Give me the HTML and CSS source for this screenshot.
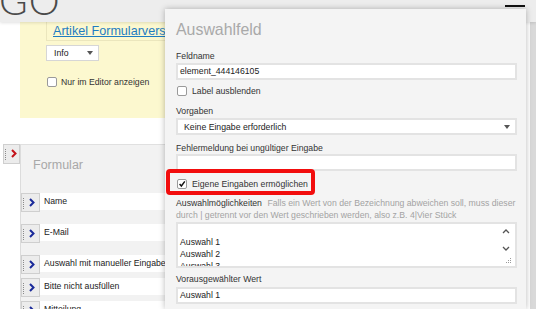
FILE: index.html
```html
<!DOCTYPE html>
<html lang="de">
<head>
<meta charset="utf-8">
<title>Formular</title>
<link rel="stylesheet" href="styles.css">
</head>
<body>
<header class="header">
  <span class="logo">GO</span>
  <span class="menu"></span>
</header>
<main class="main">
  <section class="notice">
    <div class="link-box"><a class="article-link" href="#">Artikel Formularversand</a></div>
    <div class="select small-select"><span>Info</span><span class="caret"></span></div>
    <label class="check-row notice-check"><span class="checkbox"></span><span>Nur im Editor anzeigen</span></label>
  </section>
  <section class="builder">
    <div class="handle handle-top"><span class="dots"></span><svg class="chev" viewBox="0 0 6 9" width="6" height="9"><polyline points="1,1 4.5,4.5 1,8" fill="none" stroke="#c4121a" stroke-width="2"/></svg></div>
    <div class="panel">
      <div class="panel-title">Formular</div>
      <div class="row r1"><div class="handle"><span class="dots"></span><svg class="chev" viewBox="0 0 6 9" width="6" height="9"><polyline points="1,1 4.5,4.5 1,8" fill="none" stroke="#1a2a9a" stroke-width="2"/></svg></div><div class="field">Name</div></div>
      <div class="row r2"><div class="handle"><span class="dots"></span><svg class="chev" viewBox="0 0 6 9" width="6" height="9"><polyline points="1,1 4.5,4.5 1,8" fill="none" stroke="#1a2a9a" stroke-width="2"/></svg></div><div class="field">E-Mail</div></div>
      <div class="row r3"><div class="handle"><span class="dots"></span><svg class="chev" viewBox="0 0 6 9" width="6" height="9"><polyline points="1,1 4.5,4.5 1,8" fill="none" stroke="#1a2a9a" stroke-width="2"/></svg></div><div class="field">Auswahl mit manueller Eingabemöglichkeit</div></div>
      <div class="row r4"><div class="handle"><span class="dots"></span><svg class="chev" viewBox="0 0 6 9" width="6" height="9"><polyline points="1,1 4.5,4.5 1,8" fill="none" stroke="#1a2a9a" stroke-width="2"/></svg></div><div class="field">Bitte nicht ausfüllen</div></div>
      <div class="row r5"><div class="handle"><span class="dots"></span><svg class="chev" viewBox="0 0 6 9" width="6" height="9"><polyline points="1,1 4.5,4.5 1,8" fill="none" stroke="#1a2a9a" stroke-width="2"/></svg></div><div class="field">Mitteilung</div></div>
    </div>
  </section>
</main>
<div class="side-strip"></div>
<aside class="modal">
  <h1 class="modal-title">Auswahlfeld</h1>
  <div class="label l-feldname">Feldname</div>
  <div class="input">element_444146105</div>
  <label class="check-row c-label"><span class="checkbox"></span><span>Label ausblenden</span></label>
  <div class="label l-vorgaben">Vorgaben</div>
  <div class="select big-select"><span>Keine Eingabe erforderlich</span><span class="caret"></span></div>
  <div class="label l-fehler">Fehlermeldung bei ungültiger Eingabe</div>
  <div class="input"></div>
  <div class="highlight">
    <label class="check-row c-eigene"><span class="checkbox checked"><svg viewBox="0 0 10 10" width="10" height="10"><polyline points="2,5 4.2,7.5 8.5,1.8" fill="none" stroke="#111" stroke-width="1.8"/></svg></span><span>Eigene Eingaben ermöglichen</span></label>
  </div>
  <div class="label l-options"><span class="strong">Auswahlmöglichkeiten</span> <span class="hint">Falls ein Wert von der Bezeichnung abweichen soll, muss dieser durch | getrennt vor den Wert geschrieben werden, also z.B. 4|Vier Stück</span></div>
  <div class="textarea">
    <div class="ta-lines"><div>Auswahl 1</div><div>Auswahl 2</div><div>Auswahl 3</div></div>
    <div class="ta-scroll">
      <svg viewBox="0 0 8 5" width="8" height="5"><polyline points="1,4 4,1 7,4" fill="none" stroke="#555" stroke-width="1.3"/></svg>
      <svg viewBox="0 0 8 5" width="8" height="5"><polyline points="1,1 4,4 7,1" fill="none" stroke="#555" stroke-width="1.3"/></svg>
    </div>
    <svg class="grip" viewBox="0 0 6 6" width="6" height="6"><rect x="4" y="0" width="1" height="1" fill="#999"/><rect x="2" y="2" width="1" height="1" fill="#999"/><rect x="4" y="2" width="1" height="1" fill="#999"/><rect x="0" y="4" width="1" height="1" fill="#999"/><rect x="2" y="4" width="1" height="1" fill="#999"/><rect x="4" y="4" width="1" height="1" fill="#999"/></svg>
  </div>
  <div class="label l-voraus">Vorausgewählter Wert</div>
  <div class="input">Auswahl 1</div>
</aside>
</body>
</html>
```
FILE: styles.css
```css
* { box-sizing: border-box; }
html, body { margin: 0; padding: 0; }
body {
  width: 536px;
  height: 309px;
  overflow: hidden;
  background: #fff;
  font-family: "Liberation Sans", Arial, sans-serif;
  font-size: 8.7px;
  color: #333;
  position: relative;
}
.header {
  height: 22px;
  background: #ededed;
  display: flex;
  justify-content: space-between;
  align-items: flex-start;
  overflow: hidden;
  box-shadow: 0 1px 3px rgba(0,0,0,0.12);
  position: relative;
  z-index: 1;
}
.logo {
  display: block;
  font-family: Lato, "Open Sans", sans-serif;
  font-weight: 300;
  font-size: 39px;
  line-height: 38px;
  margin-top: -19px;
  margin-left: -1px;
  color: #4a4a4a;
  letter-spacing: 1px;
}
.menu {
  display: block;
  width: 20px;
  height: 2px;
  background: #111;
  margin-top: 5px;
  margin-right: 11px;
}
.main { display: flex; flex-direction: column; height: 287px; overflow: hidden; }
.notice {
  margin-left: 20px;
  width: 420px;
  background: #fcf8cf;
  padding: 0 0 30px 26px;
}
.link-box {
  height: 19px;
  border-left: 1px solid #ebe6bd;
  border-bottom: 1px solid #ebe6bd;
  padding-left: 6px;
  line-height: 18px;
}
.article-link {
  color: #1f7dc2;
  font-size: 12.6px;
  text-decoration: underline;
  white-space: nowrap;
}
.select {
  display: flex;
  align-items: center;
  justify-content: space-between;
  background: #fff;
  color: #222;
}
.small-select {
  margin-top: 4px;
  width: 53px;
  height: 16px;
  border: 1px solid #d6d6d6;
  padding: 0 5px 0 7px;
}
.caret {
  width: 0; height: 0;
  border-left: 3.5px solid transparent;
  border-right: 3.5px solid transparent;
  border-top: 4px solid #555;
}
.check-row {
  display: flex;
  align-items: center;
  gap: 5px;
  height: 12px;
  line-height: 12px;
}
.checkbox {
  width: 10px; height: 10px;
  background: #fff;
  border: 1px solid #9a9a9a;
  border-radius: 2px;
  display: flex;
  align-items: center;
  justify-content: center;
  flex: none;
}
.checkbox svg { display: block; }
.notice-check { margin-top: 15px; margin-left: 1px; gap: 4px; }
.builder {
  display: flex;
  margin-top: 26px;
  align-items: flex-start;
}
.handle {
  width: 17px;
  height: 20px;
  background: #ececec;
  border: 1px solid #cfcfcf;
  display: flex;
  align-items: flex-start;
  padding: 4px 0 0 1px;
  gap: 5px;
  flex: none;
}
.handle-top { margin-left: 3px; }
.dots {
  width: 0;
  height: 11px;
  border-left: 1px dotted #8a8a8a;
}
.chev { display: block; }
.panel {
  width: 420px;
  height: 166px;
  overflow: hidden;
  background: #f2f2f2;
  border-top: 1px solid #e0e0e0;
  border-left: 1px solid #dcdcdc;
}
.panel-title {
  font-size: 12.5px;
  color: #a8a8a8;
  line-height: 16px;
  padding: 12px 0 0 12px;
}
.row {
  display: flex;
  align-items: flex-start;
  height: 17px;
}
.row .handle { width: 19px; height: 19px; padding-top: 4px; }
.r1 { margin-top: 20px; }
.r2, .r3 { margin-top: 14px; }
.r4, .r5 { margin-top: 6px; }
.field {
  flex: 1;
  height: 17px;
  background: #fff;
  color: #222;
  line-height: 17px;
  padding-left: 4px;
  white-space: nowrap;
}
.side-strip {
  position: absolute;
  top: 22px; bottom: 0; right: 0;
  width: 6px;
  background: #d9d9d9;
}
.modal {
  position: absolute;
  left: 165px;
  top: 9px;
  bottom: 0;
  width: 361px;
  overflow: hidden;
  background: #f4f4f4;
  box-shadow: 0 0 6px rgba(0,0,0,0.28);
  padding: 0 9px 0 11px;
  z-index: 2;
}
.modal-title {
  margin: 0;
  padding-top: 11px;
  font-size: 15.9px;
  font-weight: normal;
  line-height: 20px;
  color: #a9a9a9;
}
.label {
  line-height: 12px;
  color: #333;
}
.l-feldname { margin-top: 10px; margin-bottom: 1px; }
.input {
  height: 17px;
  background: #fff;
  border: 2px solid #e3e3e3;
  color: #222;
  line-height: 13px;
  padding-left: 2px;
}
.c-label { margin-top: 5px; margin-left: 1px; }
.l-vorgaben { margin-top: 8px; margin-bottom: 1px; }
.big-select {
  height: 17px;
  border: 2px solid #e3e3e3;
  padding: 0 5px 0 6px;
}
.l-fehler { margin-top: 7px; margin-bottom: 0; }
.highlight {
  margin: -2px 0 0 -10px;
  width: 149px;
  height: 26px;
  border: 4px solid #f20d0d;
  border-radius: 4px;
  padding: 5px 0 0 7px;
}
.c-eigene { margin: 0; }
.l-options { margin-top: 2px; margin-bottom: 1px; }
.l-options .strong { color: #333; margin-right: 3px; }
.l-options .hint { color: #a3a3a3; }
.textarea {
  position: relative;
  height: 46px;
  background: #fff;
  border: 2px solid #e3e3e3;
  overflow: hidden;
}
.ta-lines {
  padding: 12px 0 0 2px;
  line-height: 12px;
  color: #222;
}
.ta-scroll {
  position: absolute;
  right: 5px;
  top: 5px;
  display: flex;
  flex-direction: column;
  gap: 12px;
}
.ta-scroll svg { display: block; }
.grip { position: absolute; right: 3px; bottom: 2px; display: block; }
.l-voraus { margin-top: 5px; margin-bottom: 2px; }
```
